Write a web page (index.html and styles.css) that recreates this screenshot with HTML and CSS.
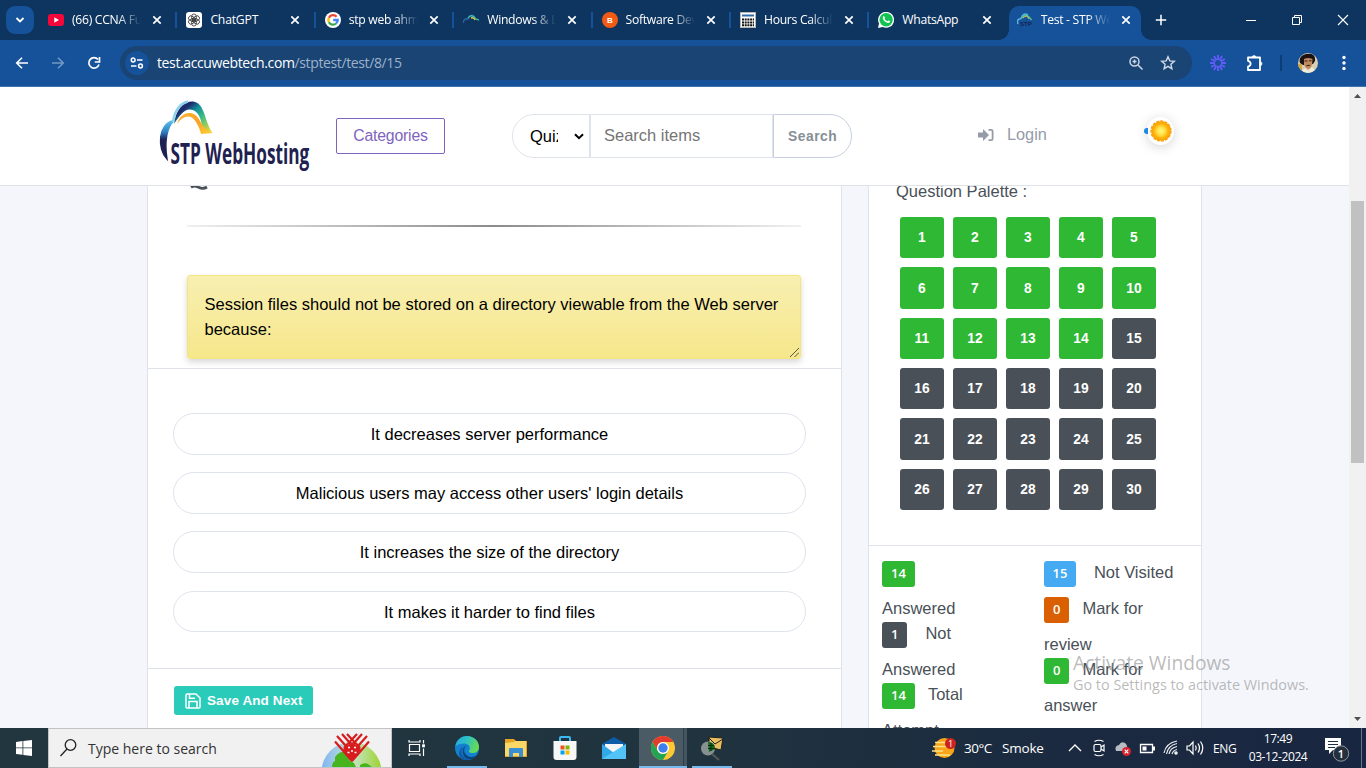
FILE: index.html
```html
<!DOCTYPE html>
<html lang="en">
<head>
<meta charset="utf-8">
<title>Test - STP WebHosting</title>
<link rel="stylesheet" href="styles.css">
</head>
<body>
<svg width="0" height="0" class="defs">
  <defs>
    <linearGradient id="cloudTop" x1="0" y1="0" x2="1" y2="1"><stop offset="0" stop-color="#1d2a6b"/><stop offset=".25" stop-color="#1d2a6b"/><stop offset=".42" stop-color="#16919b"/><stop offset=".62" stop-color="#3cbc83"/><stop offset="1" stop-color="#f2dc3b"/></linearGradient>
    <linearGradient id="cloudIn" x1="0" y1="0" x2="1" y2="1"><stop offset="0" stop-color="#ffb52b"/><stop offset=".5" stop-color="#fba026"/><stop offset="1" stop-color="#fbd335"/></linearGradient>
    <linearGradient id="cloudLeft" x1="0" y1="0" x2="0" y2="1"><stop offset="0" stop-color="#5cc0ea"/><stop offset=".3" stop-color="#2c7fc4"/><stop offset=".5" stop-color="#1c2053"/><stop offset="1" stop-color="#1c2053"/></linearGradient>
    <radialGradient id="sun"><stop offset="0" stop-color="#fff97c"/><stop offset=".4" stop-color="#ffe24a"/><stop offset=".7" stop-color="#ffb60d"/><stop offset="1" stop-color="#fb9d05"/></radialGradient>
    <linearGradient id="edgeG" x1="0" y1="0" x2="1" y2=".3"><stop offset="0" stop-color="#2aa4e2"/><stop offset=".5" stop-color="#2bc2c6"/><stop offset="1" stop-color="#65d958"/></linearGradient>
    <linearGradient id="globe"><stop offset="0" stop-color="#80b4f5"/><stop offset=".5" stop-color="#c7e6d0"/><stop offset="1" stop-color="#9ed32f"/></linearGradient>
    <symbol id="x" viewBox="0 0 10 10"><path d="M1.3 1.3l7.4 7.4M8.7 1.3L1.3 8.7" stroke="#fff" stroke-width="1.7"/></symbol>
    <symbol id="arc" viewBox="0 0 16 16"><path d="M0 11Q1 6 5 7Q8 1 12 5" fill="none" stroke="#2d65a0" stroke-width="1.6"/><path d="M5 6Q8 1 13 7L16 8" fill="none" stroke="#40b7a4" stroke-width="1.4"/><path d="M8 6Q11 5 12 8" fill="none" stroke="#e2c44d" stroke-width="1.4"/></symbol>
  </defs>
</svg>

<div class="tabstrip">
  <div class="tab-search"><svg width="12" height="12" viewBox="0 0 12 12"><path d="M2.500 4l3.500 3.500L9.500 4" fill="none" stroke="#fff" stroke-width="1.800"/></svg></div>
  <div class="tabs">
    <div class="tab"><svg class="fav" viewBox="0 0 16 16"><rect y="2" width="16" height="12" rx="3" fill="#f7063a"/><path d="M6.300 5.300v5.400L11 8z" fill="#fff"/></svg><span class="title s1">(66) CCNA Full</span><svg class="close"><use href="#x"/></svg></div>
    <div class="tab"><svg class="fav" viewBox="0 0 16 16"><rect width="16" height="16" rx="3" fill="#fff"/><g fill="none" stroke="#333" stroke-width=".8"><rect x="5.700" y="2" width="4.600" height="7" rx="2.300"/><rect x="5.700" y="2" width="4.600" height="7" rx="2.300" transform="rotate(60 8 8)"/><rect x="5.700" y="2" width="4.600" height="7" rx="2.300" transform="rotate(120 8 8)"/><rect x="5.700" y="2" width="4.600" height="7" rx="2.300" transform="rotate(180 8 8)"/><rect x="5.700" y="2" width="4.600" height="7" rx="2.300" transform="rotate(240 8 8)"/><rect x="5.700" y="2" width="4.600" height="7" rx="2.300" transform="rotate(300 8 8)"/></g></svg><span class="title s2">ChatGPT</span><svg class="close"><use href="#x"/></svg></div>
    <div class="tab"><svg class="fav" viewBox="0 0 16 16"><circle cx="8" cy="8" r="8" fill="#fff"/><g fill="none" stroke-width="2.300"><path d="M11.600 4.700A4.700 4.700 0 0 0 3.900 5.700" stroke="#ea4335"/><path d="M3.900 5.700a4.700 4.700 0 0 0 0 4.600" stroke="#fbbc05"/><path d="M3.900 10.300a4.700 4.700 0 0 0 7.200 1.200" stroke="#34a853"/><path d="M11.100 11.500A4.700 4.700 0 0 0 12.700 8H8.200" stroke="#4285f4"/></g></svg><span class="title s3">stp web ahme</span><svg class="close"><use href="#x"/></svg></div>
    <div class="tab"><svg class="fav"><use href="#arc"/></svg><span class="title s4">Windows &amp; Li</span><svg class="close"><use href="#x"/></svg></div>
    <div class="tab"><svg class="fav" viewBox="0 0 16 16"><circle cx="8" cy="8" r="8" fill="#f15a13"/><text x="8" y="11" font-size="8" font-weight="bold" font-family="Liberation Sans, sans-serif" text-anchor="middle" fill="#fff">B</text></svg><span class="title s5">Software Dev</span><svg class="close"><use href="#x"/></svg></div>
    <div class="tab"><svg class="fav" viewBox="0 0 16 16"><rect x=".5" y=".5" width="15" height="15" fill="#fff" stroke="#b8b8b8"/><path d="M2 3.500h12" stroke="#2e6aa8" stroke-width="2"/><path d="M2 7.500h12M2 10.500h12M2 13.300h12" stroke="#111" stroke-width="1.900" stroke-dasharray="2 .7"/></svg><span class="title s6">Hours Calcula</span><svg class="close"><use href="#x"/></svg></div>
    <div class="tab nosep"><svg class="fav" viewBox="0 0 16 16"><path d="M0 16l1-4.500A8 8 0 1 1 4.600 15z" fill="#fff"/><circle cx="8.100" cy="7.800" r="6.700" fill="#12c352"/><path d="M5 4.500c1.500-1 2 .8 2.100 1.400-.9 1 .2 2.300 2.300 3.300.8-.9 1-1.200 2.800.1-.4 2.200-2.400 2-4.200 1C5.300 8.800 4.300 6.500 5 4.500z" fill="#fff"/></svg><span class="title s7">WhatsApp</span><svg class="close"><use href="#x"/></svg></div>
    <div class="tab active nosep"><svg class="fav" viewBox="0 0 16 16"><path d="M1 12Q-1 7 4 6.500Q6 0 11 3" fill="none" stroke="#57b6de" stroke-width="1.500"/><path d="M5 6Q8 1 12 5L14.500 8" fill="none" stroke="#4bc1a0" stroke-width="1.500"/><path d="M6 6Q10 2 12 7" fill="none" stroke="#e6c34a"/><text x="3" y="14" font-size="6" font-weight="bold" font-family="Liberation Sans, sans-serif" fill="#152352">STP</text></svg><span class="title s8">Test - STP Wel</span><svg class="close"><use href="#x"/></svg></div>
  </div>
  <svg class="newtab" viewBox="0 0 12 12"><path d="M6 .8v10.400M.8 6h10.400" stroke="#fff" stroke-width="1.500"/></svg>
  <div class="window-buttons">
    <svg viewBox="0 0 46 40"><path d="M18 20.500h10" stroke="#fff"/></svg>
    <svg viewBox="0 0 46 40"><path d="M18.500 17.500h7v7h-7zM20.500 17.500v-2h7v7h-2" fill="none" stroke="#fff"/></svg>
    <svg viewBox="0 0 46 40"><path d="M18 15l10 10M28 15L18 25" stroke="#fff" stroke-width="1.100"/></svg>
  </div>
</div>

<div class="toolbar">
  <svg class="nav" viewBox="0 0 16 16"><path d="M14 8H3M8 2.700L2.700 8 8 13.300" fill="none" stroke="#fff" stroke-width="1.600"/></svg>
  <svg class="nav dim" viewBox="0 0 16 16"><path d="M2 8H13M8 2.700L13.300 8 8 13.300" fill="none" stroke="#fff" stroke-width="1.600"/></svg>
  <svg class="nav" viewBox="0 0 16 16"><path d="M13 9.500A5.200 5.200 0 1 1 12 4.500M13.500 2v5H8.800" fill="none" stroke="#fff" stroke-width="1.700"/></svg>
  <div class="omnibox">
    <div class="site-info"><svg width="14" height="14" viewBox="0 0 14 14" fill="none" stroke="#fff" stroke-width="1.500"><circle cx="3.200" cy="4" r="1.900"/><path d="M7 4h5.500M1 10h5.500"/><circle cx="10.500" cy="10" r="1.900"/></svg></div>
    <div class="url">test.accuwebtech.com<span>/stptest/test/8/15</span></div>
    <svg class="zoomicon" viewBox="0 0 16 16" fill="none" stroke="#cbd6e3" stroke-width="1.500"><circle cx="6.500" cy="6.500" r="4.500"/><path d="M10 10l4.500 4.500M4.500 6.500h4M6.500 4.500v4"/></svg>
    <svg class="star" viewBox="0 0 16 16"><path d="M8 1.800l1.800 4.100 4.500.4-3.400 3 1 4.400L8 11.400l-3.900 2.300 1-4.400-3.400-3 4.500-.4z" fill="none" stroke="#d0dae6" stroke-width="1.400"/></svg>
  </div>
  <svg class="burst" viewBox="-8 -8 16 16" stroke="#625bf7" stroke-width="1.900"><path d="M-8 0h5M3 0h5M0-8v5M0 3v5M-6.900-4l4.300 2.500M2.600 1.500L6.900 4M-6.900 4l4.300-2.500M2.600-1.500L6.900-4M-4-6.900l2.500 4.300M1.500 2.600L4 6.900M4-6.900L1.500-2.600M-1.500 2.600L-4 6.900"/></svg>
  <svg class="puzzle" viewBox="0 0 18 18"><path d="M2 3.500h12v12.500H2v-3.500c3.500-1 3.500-4.700 0-5.700z" fill="none" stroke="#fff" stroke-width="1.800" stroke-linejoin="round"/><path d="M6 3.500a2 2 0 0 1 4 0zM14 7.700a2 2 0 0 1 0 4z" fill="#fff" stroke="#fff" stroke-width=".6"/></svg>
  <i class="toolbar-sep"></i>
  <svg class="avatar" viewBox="0 0 20 20"><clipPath id="avc"><circle cx="10" cy="10" r="10"/></clipPath><g clip-path="url(#avc)"><path d="M0 0h20v20H0z" fill="#d9cfb0"/><path d="M2 10Q0 3 8 1Q18-1 17 8L15 11L5 12z" fill="#1c1214"/><path d="M6 6Q10 4 14.500 6L14 12Q12 18 8 15L6 12z" fill="#c08a5f"/><path d="M6.500 8h3M11 7.800h2.500M8.500 12.800l3.500-.6" stroke="#38201a" stroke-width="1.100"/><path d="M1 20l6-5 3 3 4-4 5 6z" fill="#f3ecdd"/><path d="M0 11h4v6H0z" fill="#d2a742"/></g></svg>
  <svg class="menu" viewBox="0 0 4 16" fill="#fff"><circle cx="2" cy="2.500" r="1.700"/><circle cx="2" cy="8" r="1.700"/><circle cx="2" cy="13.500" r="1.700"/></svg>
</div>

<div class="viewport">
  <div class="site">
    <header class="header">
      <svg class="logo" viewBox="0 0 152 74">
        <path d="M8 60C-2 50-1 24 15 21.500C8 28 5 42 8 60z" fill="url(#cloudLeft)" stroke="url(#cloudLeft)" stroke-width="1.500"/>
        <path d="M15 25C17 10 25 2 34 2.500C46 4 45 21 53 33L43 31C43 20 39 11 31 10.500C24 10.500 20 18 15 25z" fill="url(#cloudTop)"/>
        <path d="M18 25C21 13 35 9 41 22Q44 29 54 34L42 35C41 31 40 28 37 23C32 15 24 16 18 25z" fill="url(#cloudIn)"/>
        <path d="M14 23C16 10 21 4.500 29 2.500" fill="none" stroke="#8fd3ea" stroke-width="2.500"/>
        <text transform="translate(11.500 65) scale(.78 1)" font-family="Open Sans, sans-serif" font-size="29" font-weight="700" fill="#20214f" textLength="178" lengthAdjust="spacingAndGlyphs">STP WebHosting</text>
      </svg>
      <a class="categories">Categories</a>
      <div class="search">
        <div class="type"><span>Quiz</span><svg width="10" height="7" viewBox="0 0 10 7"><path d="M1 1.200l4 4 4-4" fill="none" stroke="#000" stroke-width="2"/></svg></div>
        <div class="field">Search items</div>
        <div class="go">Search</div>
      </div>
      <svg class="login-icon" viewBox="0 0 16 14"><path d="M0 4.600h5V1l6 6-6 6V9.400H0z" fill="#969ba9"/><path d="M10.500 1.800h2.600a1.500 1.500 0 0 1 1.500 1.500v7.400a1.500 1.500 0 0 1-1.500 1.500h-2.600" fill="none" stroke="#969ba9" stroke-width="1.800"/></svg>
      <span class="login">Login</span>
      <div class="theme"><svg width="22" height="22" viewBox="-11 -11 22 22"><circle r="9.800" fill="url(#sun)"/><circle r="10" fill="none" stroke="#fb9d05" stroke-width="1.300" stroke-dasharray="3 1.200"/></svg></div>
    </header>
    <main class="content">
      <section class="question-card">
        <div class="question">
          <svg class="q-tail" width="18" height="6" viewBox="0 0 18 6"><path d="M1 2.200Q4.500 0 8.500 2.200Q13 4.500 17 2" fill="none" stroke="#495057" stroke-width="2.800"/></svg>
          <div class="rule"></div>
          <div class="prompt">Session files should not be stored on a directory viewable from the Web server because:
            <svg class="grip" width="9" height="9" viewBox="0 0 9 9"><path d="M0 9L9 0M4.500 9L9 4.500" stroke="#555"/></svg>
          </div>
        </div>
        <div class="answers">
          <div class="answer">It decreases server performance</div>
          <div class="answer">Malicious users may access other users' login details</div>
          <div class="answer">It increases the size of the directory</div>
          <div class="answer">It makes it harder to find files</div>
        </div>
        <div class="actions"><a class="save"><svg width="16" height="16" viewBox="0 0 16 16" fill="none" stroke="#fff" stroke-width="1.500"><path d="M1 2.200Q1 1 2.200 1H11l4 4v9Q15 15 14 15H2Q1 15 1 14z"/><path d="M4 15V8.500h8V15M4.500 1v4.200H10"/></svg>Save And Next</a></div>
      </section>
      <aside class="palette-card">
        <div class="palette">
          <div class="palette-title">Question Palette :</div>
          <div class="grid">
            <b class="done">1</b><b class="done">2</b><b class="done">3</b><b class="done">4</b><b class="done">5</b>
            <b class="done">6</b><b class="done">7</b><b class="done">8</b><b class="done">9</b><b class="done">10</b>
            <b class="done">11</b><b class="done">12</b><b class="done">13</b><b class="done">14</b><b>15</b>
            <b>16</b><b>17</b><b>18</b><b>19</b><b>20</b>
            <b>21</b><b>22</b><b>23</b><b>24</b><b>25</b>
            <b>26</b><b>27</b><b>28</b><b>29</b><b>30</b>
          </div>
        </div>
        <div class="legend">
          <div class="col-a">
            <div class="key"><i class="green">14</i></div>
            <div>Answered</div>
            <div class="key"><i class="grey">1</i><span class="wide">Not</span></div>
            <div>Answered</div>
            <div class="key"><i class="green">14</i><span>Total</span></div>
            <div>Attempt</div>
          </div>
          <div class="col-b">
            <div class="key"><i class="blue">15</i><span class="wide">Not Visited</span></div>
            <div class="key"><i class="orange">0</i><span>Mark for</span></div>
            <div>review</div>
            <div class="key"><i class="green">0</i><span>Mark for</span></div>
            <div>answer</div>
          </div>
        </div>
      </aside>
    </main>
  </div>
  <div class="scrollbar"><svg width="7" height="4"><path d="M0 4l3.500-4L7 4z" fill="#505050"/></svg><i></i><svg width="7" height="4"><path d="M0 0l3.500 4L7 0z" fill="#505050"/></svg></div>
  <div class="watermark"><div class="w1">Activate Windows</div><div class="w2">Go to Settings to activate Windows.</div></div>
</div>

<div class="taskbar">
  <div class="start"><svg width="16" height="16" viewBox="0 0 16 16"><path d="M0 2l6.500-.9v6.400H0zM7.300 1L16 0v7.500H7.300zM0 8.300h6.500v6.400L0 14zM7.300 8.300H16V16l-8.700-1.100z" fill="#fff"/></svg></div>
  <div class="tsearch">
    <svg width="17" height="18" viewBox="0 0 17 18"><circle cx="10.500" cy="6" r="5.300" fill="none" stroke="#222" stroke-width="1.300"/><path d="M7 10L.5 17" stroke="#222" stroke-width="1.300"/></svg>
    <span>Type here to search</span>
    <svg class="doodle" width="60" height="38" viewBox="0 0 60 38"><circle cx="29.500" cy="43" r="30" fill="url(#globe)"/><path d="M13 28q4-6 12-6l7 4-5 5 5 3 2 4H10q0-5 3-6zM38 36q4-3 8-1l4 3H38z" fill="#48b41d"/><path d="M13 12.500L30 32M15 7L32 26M20 5L35 22M25 5L38 19M47 12.500L30 32M45 7L28 26M40 5L25 22M35 5L22 19" stroke="#d91b1d" stroke-width="2.200"/><path d="M21 20l9-7 9 7-9 13z" fill="#d91b1d"/><path d="M26 18.500h2M32 18.500h2M29 22h2M25.500 23.500h2M32.500 23.500h2" stroke="#fff" stroke-width="1.600"/></svg>
  </div>
  <div class="taskview"><svg width="18" height="16" viewBox="0 0 18 16" fill="none" stroke="#fff" stroke-width="1.200"><path d="M1.500 4.500h10v7h-10zM1 0v2h11V0M1 16v-2h11v2M15.500 0v3.500M15.500 8.500V16"/><path d="M15.500 4.300v3" stroke-width="2.800"/></svg></div>
  <div class="app open"><svg width="24" height="24" viewBox="0 0 24 24"><circle cx="12" cy="12" r="12" fill="#1480d0"/><path d="M.4 10C2 3 7 0 12 0c7 0 12 5 12 11 0 4-3 6-6.500 6C14 17 13 15.500 14.500 14c2-6-6-9-14.100-4z" fill="url(#edgeG)"/><path d="M9 10c-5 5-2 12 5 14-8 1-12-5-9-10 1-3 5-5 9-4z" fill="#105aa6"/><path d="M11 10c-4 4-1 10 5 11 3 0 5-1 7-3-4 7-13 7-15 0-1-4 0-7 3-8z" fill="#0c437d"/></svg></div>
  <div class="app"><svg width="22" height="20" viewBox="0 0 22 20"><path d="M0 1h9l2 2h11v16H0z" fill="#e7a323"/><path d="M0 5l9-1 1-1h11v15H0z" fill="#fbd768"/><path d="M4 19v-8q0-1 1-1h12q1 0 1 1v8h-4v-4H8v4z" fill="#3a8fd3"/></svg></div>
  <div class="app"><svg width="24" height="24" viewBox="0 0 24 24"><path d="M7 5V2q0-1 1-1h8q1 0 1 1v3" fill="none" stroke="#3abaf1" stroke-width="2"/><path d="M.5 5h23v16q0 3-3 3h-17q-3 0-3-3z" fill="#f7f7f7"/><path d="M7.500 9.500h4v4h-4z" fill="#f25022"/><path d="M12.500 9.500h4v4h-4z" fill="#7fba00"/><path d="M7.500 14.500h4v4h-4z" fill="#00a4ef"/><path d="M12.500 14.500h4v4h-4z" fill="#ffb900"/></svg></div>
  <div class="app"><svg width="24" height="24" viewBox="0 0 24 24"><path d="M0 8l12-7 12 7v14H0z" fill="#0d5da8"/><path d="M3 8h18v8H3z" fill="#f4f6f8"/><path d="M0 8l12 9 12-9v15H0z" fill="#31a8e8"/><path d="M0 23L24 8v15z" fill="#53c4f7"/></svg></div>
  <div class="app current"><svg width="24" height="24" viewBox="0 0 24 24"><circle cx="12" cy="12" r="12" fill="#fcc934"/><path d="M1.600 6A12 12 0 0 1 22.400 6H12a6 6 0 0 0-5.200 9z" fill="#e33b2e"/><path d="M1.600 6l5.200 9A6 6 0 0 0 17.200 15L12 24A12 12 0 0 1 1.600 6z" fill="#23a455"/><circle cx="12" cy="12" r="6" fill="#fff"/><circle cx="12" cy="12" r="4.700" fill="#3e7fee"/></svg></div>
  <div class="app open"><svg width="24" height="25" viewBox="0 0 24 25"><path d="M9 1l14 1-2 12-12-3z" fill="#e7bd61" stroke="#1f211c"/><path d="M9 2l6 6 8-5" fill="none" stroke="#25221a"/><circle cx="8" cy="12.500" r="7" fill="#87918f"/><path d="M8 6q7 0 7 7l-6 3z" fill="#126d23"/><path d="M8 9.500h6M8 12.500h7M11 7v8" stroke="#062e0c"/><path d="M12 18l7 6" stroke="#555" stroke-width="2.200"/></svg></div>
  <div class="tray">
    <svg class="weather" width="24" height="20" viewBox="0 0 24 20"><circle cx="12.500" cy="10" r="10" fill="#f9a51a"/><path d="M3 4.500h11M1 8.500h18M0 13h11M3 17h15" stroke="#ffe389" stroke-width="1.600"/><circle cx="18.500" cy="5.500" r="5.500" fill="#cb2420"/><text x="18.500" y="9" font-size="9" text-anchor="middle" font-family="Open Sans, sans-serif" fill="#fff">1</text></svg>
    <span class="temp">30°C</span><span class="smoke">Smoke</span>
    <svg class="ti" viewBox="0 0 24 24"><path d="M6 15l6-6 6 6" fill="none" stroke="#fff" stroke-width="1.400"/></svg>
    <svg class="ti" viewBox="0 0 24 24" fill="none" stroke="#fff" stroke-width="1.200"><rect x="7" y="8.500" width="7" height="7" rx="1.500"/><path d="M14 11l3-2v6l-3-2M7.500 5.500q4.500-2.500 9 0M7.500 18.500q4.500 2.500 9 0"/></svg>
    <svg class="ti" viewBox="0 0 24 24"><path d="M5 15q-2-5 3-6 2-4 6-2 3 2 2 8z" fill="#b7bcc2"/><circle cx="15.500" cy="15.500" r="4.500" fill="#d8222f"/><path d="M13.700 13.700l3.600 3.600m0-3.600l-3.600 3.600" stroke="#fff" stroke-width="1.200"/></svg>
    <svg class="ti" viewBox="0 0 24 24"><path d="M5.500 8.500h12v8h-12z" fill="none" stroke="#fff" stroke-width="1.300"/><path d="M7.500 10.500h4v4h-4zM18 10.500h2v4h-2z" fill="#fff"/></svg>
    <svg class="ti" viewBox="0 0 24 24" fill="none" stroke="#e7ebef" stroke-width="1.200"><path d="M10 18q1-6 8-7.500M13 18q1-3.500 5-4.500M7.500 18q1.500-8.500 10.500-10.500M5 17Q7 7 18 5"/><circle cx="17" cy="17" r="1.200" fill="#fff"/></svg>
    <svg class="ti" viewBox="0 0 24 24" fill="none" stroke="#fff" stroke-width="1.200"><path d="M4 10h2.500l3.500-4v12l-3.500-4H4zM12.500 9.500q1.500 2.500 0 5M15 7.500q3 4.500 0 9M17.500 5.500q4.500 6.500 0 13"/></svg>
    <span class="eng">ENG</span>
    <div class="clock"><div class="time">17:49</div><div class="date">03-12-2024</div></div>
    <svg class="notice" width="26" height="26" viewBox="0 0 26 26"><path d="M1 1h16v12H9l-4 4v-4H1z" fill="#fff"/><path d="M4 4.500h10M4 7.500h10M4 10.500h7" stroke="#203047"/><circle cx="17" cy="16.500" r="7.700" fill="#25303c" stroke="#8f969d"/><text x="17" y="20.500" font-size="11" font-weight="600" text-anchor="middle" font-family="Open Sans, sans-serif" fill="#fff">1</text></svg>
  </div>
</div>
</body>
</html>
```
FILE: styles.css
```css
* { box-sizing: border-box; }
body { margin: 0; width: 1366px; height: 768px; overflow: hidden; display: flex; flex-direction: column; font-family: "Liberation Sans", Arial, sans-serif; font-size: 16px; }
svg { display: block; flex: none; }
.defs { position: absolute; }

/* browser tabs */
.tabstrip { height: 40px; flex: none; background: #0d3560; display: flex; align-items: center; font-family: "Open Sans", "Noto Sans", sans-serif; font-size: 12px; color: #fff; }
.tab-search { width: 28px; height: 28px; margin: 0 5px 0 6px; border-radius: 9px; background: #15529a; display: flex; align-items: center; justify-content: center; flex: none; }
.tabs { display: flex; height: 40px; padding-top: 6px; }
.tab { width: 138.400px; height: 34px; display: flex; align-items: center; padding: 0 14px 6px 9px; position: relative; flex: none; }
.tab::after { content: ""; position: absolute; right: 0; top: 6px; width: 2px; height: 16px; background: #15529a; }
.tab.nosep::after { display: none; }
.tab.active { background: #15529a; border-radius: 10px 10px 0 0; width: 132px; padding-right: 8px; margin-left: 1px; padding-left: 8px; }
.tab.active::before { content: ""; position: absolute; left: -10px; bottom: 0; width: 152px; height: 10px; background: radial-gradient(circle at 0 0, transparent 9.500px, #15529a 10px) 0 0 / 10px 10px no-repeat, radial-gradient(circle at 10px 0, transparent 9.500px, #15529a 10px) 100% 0 / 10px 10px no-repeat; }
.fav { width: 16px; height: 16px; margin-right: 8px; }
.title { width: 70px; overflow: hidden; white-space: nowrap; height: 18px; line-height: 18px; margin-right: 10px; font-size: 12.200px; letter-spacing: -.3px; -webkit-mask-image: linear-gradient(90deg, #000 46px, transparent 69px); mask-image: linear-gradient(90deg, #000 46px, transparent 69px); flex: none; }
.s2, .s7 { -webkit-mask-image: none; mask-image: none; }
.s2 { letter-spacing: -.2px; }
.close { width: 10px; height: 10px; }
.newtab { width: 12px; height: 12px; margin-left: 14px; }
.window-buttons { display: flex; margin-left: auto; }
.window-buttons svg { width: 46px; height: 40px; }

/* address bar */
.toolbar { height: 47px; flex: none; background: #15529a; border-bottom: 1px solid #3f73b1; display: flex; align-items: center; padding-left: 14px; }
.nav { width: 16px; height: 16px; margin-right: 20px; }
.nav.dim { opacity: .4; }
.omnibox { width: 1072px; height: 34px; margin-left: -2px; border-radius: 17px; background: #194474; display: flex; align-items: center; padding-left: 5px; font-family: "Open Sans", "Noto Sans", sans-serif; font-size: 14px; }
.site-info { width: 24px; height: 24px; border-radius: 50%; background: #15529a; display: flex; align-items: center; justify-content: center; margin-right: 8px; }
.url { color: #fff; letter-spacing: -.38px; width: 971px; white-space: nowrap; line-height: 18px; padding-bottom: 1px; }
.url span { color: #9eb2ca; }
.zoomicon { width: 16px; height: 16px; margin-right: 16px; }
.star { width: 16px; height: 16px; }
.burst { width: 16px; height: 16px; margin-left: 18px; }
.puzzle { width: 18px; height: 18px; margin-left: 20px; }
.toolbar-sep { width: 2px; height: 16px; background: #0d3d76; margin-left: 16px; }
.avatar { width: 20px; height: 20px; margin-left: 16px; }
.menu { width: 4px; height: 16px; margin-left: 24px; }

/* page */
.viewport { height: 641px; flex: none; display: flex; position: relative; overflow: hidden; }
.site { width: 1349px; background: #f4f6fb; height: 641px; overflow: hidden; }
.header { height: 99px; background: #fff; border-bottom: 1px solid #dfe3e9; display: flex; align-items: flex-start; position: relative; z-index: 1; }
.logo { width: 152px; height: 74px; margin: 12px 0 0 159px; }
.categories { width: 109px; height: 36px; margin: 31px 0 0 25px; border: 1px solid #7f63bd; border-radius: 2px; color: #8064bd; line-height: 34px; text-align: center; font-size: 15.800px; letter-spacing: -.2px; }
.search { display: flex; margin: 27px 0 0 67px; height: 44px; line-height: 42px; }
.type { width: 78px; border: 1px solid #dfe3ec; border-radius: 22px 0 0 22px; display: flex; align-items: center; padding-left: 17px; gap: 16px; color: #000; font-size: 16.500px; }
.type span { width: 28px; overflow: hidden; }
.field { width: 183px; border: 1px solid #dfe3ec; padding-left: 13px; color: #757575; font-size: 16.500px; line-height: 41px; }
.go { width: 79px; border: 1px solid #c6cfe0; border-radius: 0 22px 22px 0; color: #868e96; font-weight: bold; font-size: 13.800px; letter-spacing: .55px; padding-left: 14px; line-height: 43px; }
.login-icon { width: 16px; height: 14px; margin: 41px 0 0 126px; }
.login { color: #969ba9; margin: 37px 0 0 13px; width: 41px; line-height: 20px; font-size: 16.300px; }
.theme { width: 27px; height: 28px; border-radius: 50%; background: #fff; margin: 30px 0 0 99px; display: flex; align-items: center; justify-content: center; box-shadow: 0 2px 12px rgba(0,0,0,.17); position: relative; }
.theme::before { content: ""; position: absolute; left: -3px; top: 11px; width: 4px; height: 6px; border-radius: 4px 0 0 4px; background: #1e88e5; }
.content { display: flex; height: 542px; padding-left: 147px; gap: 26px; color: #495057; }
.question-card { width: 695px; height: 560px; background: #fff; border: solid #dfe3e9; border-width: 0 1px; }
.question { border-bottom: 1px solid #dfe3e9; padding: 0 40px 0 39px; height: 184px; }
.q-tail { margin-left: 3px; height: 6px; margin-top: -1px; }
.rule { margin-top: 34px; height: 2px; background: linear-gradient(90deg, #f0f0f0, #8c8b8b, #f0f0f0); }
.prompt { margin-top: 48px; width: 614px; height: 84px; padding: 16px 16.500px; line-height: 25px; color: #000; border: 1px solid #f5e57f; border-radius: 3px; background: linear-gradient(#f8efb1, #f6e78b); box-shadow: 0 3px 6px rgba(0,0,0,.16); position: relative; font-size: 16.500px; }
.grip { position: absolute; right: 1px; bottom: 1px; }
.answers { height: 300px; border-bottom: 1px solid #dfe3e9; padding: 44px 35px 0 25px; display: flex; flex-direction: column; gap: 17.400px; }
.answer { height: 41.800px; border: 1px solid #dfe3ec; border-radius: 21px; text-align: center; line-height: 41px; color: #000; font-size: 16.500px; }
.actions { padding: 17px 0 0 26px; }
.save { display: flex; align-items: center; width: 139px; height: 29px; background: #2bcbba; border-radius: 3px; color: #fff; font-weight: bold; font-size: 13.500px; letter-spacing: .12px; padding-left: 11px; gap: 6px; white-space: nowrap; line-height: 30px; }
.palette-card { width: 334px; height: 560px; background: #fff; border: solid #dfe3e9; border-width: 0 1px; }
.palette { height: 367px; border-bottom: 1px solid #dfe3e9; padding-left: 27px; }
.palette-title { height: 31px; line-height: 25px; margin-top: -7px; font-size: 16.500px; }
.grid { margin: 7px 0 0 4px; display: grid; grid-template-columns: repeat(5, 44px); grid-auto-rows: 41.350px; gap: 9px; }
.grid b { background: #495057; color: #fff; border-radius: 3px; display: flex; align-items: center; justify-content: center; font-size: 13.800px; letter-spacing: .2px; }
.grid b.done { background: #2fb834; }
.legend { display: flex; padding: 14px 0 0 13px; line-height: 25px; font-size: 16.500px; }
.col-a { width: 162px; }
.key { height: 36px; display: flex; }
.key i { font-style: normal; height: 26px; border-radius: 3px; color: #fff; padding: 0 9px; font-weight: 600; font-family: "Open Sans", sans-serif; font-size: 13px; margin: 1px 13px 0 0; flex: none; }
.key i.blue { padding: 0 8.500px; }
.wide { margin-left: 5px; }
.green { background: #2fb834; }
.grey { background: #495057; }
.blue { background: #45aaf2; }
.orange { background: #d95f00; }
.scrollbar { width: 17px; background: #f1f1f1; display: flex; flex-direction: column; align-items: center; padding: 7px 0 7px; }
.scrollbar i { width: 13px; height: 262px; background: #c1c1c1; margin: 103px 0 auto; }
.watermark { position: absolute; left: 1073px; top: 563px; font-family: "Open Sans", "Noto Sans", sans-serif; color: rgba(140,140,140,.6); white-space: nowrap; }
.w1 { font-size: 19.200px; line-height: 25px; }
.w2 { font-size: 14.400px; line-height: 20px; }

/* taskbar */
.taskbar { height: 40px; flex: none; background: linear-gradient(90deg, #21363f 0, #20343f 50%, #1b2a40 78%, #192641); display: flex; align-items: center; color: #fff; font-family: "Open Sans", "Noto Sans", sans-serif; }
.start { width: 48px; display: flex; justify-content: center; }
.tsearch { width: 344px; height: 40px; border: 1px solid #c1c3c5; background: #f1f1f1; display: flex; align-items: center; padding-left: 11px; color: #333; font-size: 14px; }
.tsearch span { margin-left: 11px; width: 234px; white-space: nowrap; }
.doodle { align-self: flex-end; }
.taskview { width: 50px; display: flex; justify-content: center; }
.app { width: 49px; height: 40px; display: flex; align-items: center; justify-content: center; flex: none; }
.app.open { background: linear-gradient(#76b9ed, #76b9ed) no-repeat 50% 100% / 40px 2px; }
.app.current { background: linear-gradient(#76b9ed, #76b9ed) no-repeat 1px 100% / 48px 2px, linear-gradient(90deg, transparent 1px, #4b5b65 1px, #4b5b65 45px, #2e3f4a 45px, #2e3f4a 46px, #45555f 46px); }
.tray { margin-left: auto; display: flex; align-items: center; height: 40px; font-size: 13.500px; width: 434px; flex: none; }
.tray::after { content: ""; width: 1px; height: 40px; background: #68758a; margin-left: 11px; }
.weather { margin-right: 8px; }
.temp { width: 38px; letter-spacing: -.5px; }
.smoke { width: 61px; letter-spacing: -.2px; }
.ti { width: 24px; height: 24px; }
.eng { width: 35px; padding-left: 6px; font-size: 12px; letter-spacing: -.3px; }
.clock { width: 72px; text-align: center; font-size: 12px; line-height: 18px; letter-spacing: -.4px; }
.notice { margin: 3px 0 0 10px; }
```
